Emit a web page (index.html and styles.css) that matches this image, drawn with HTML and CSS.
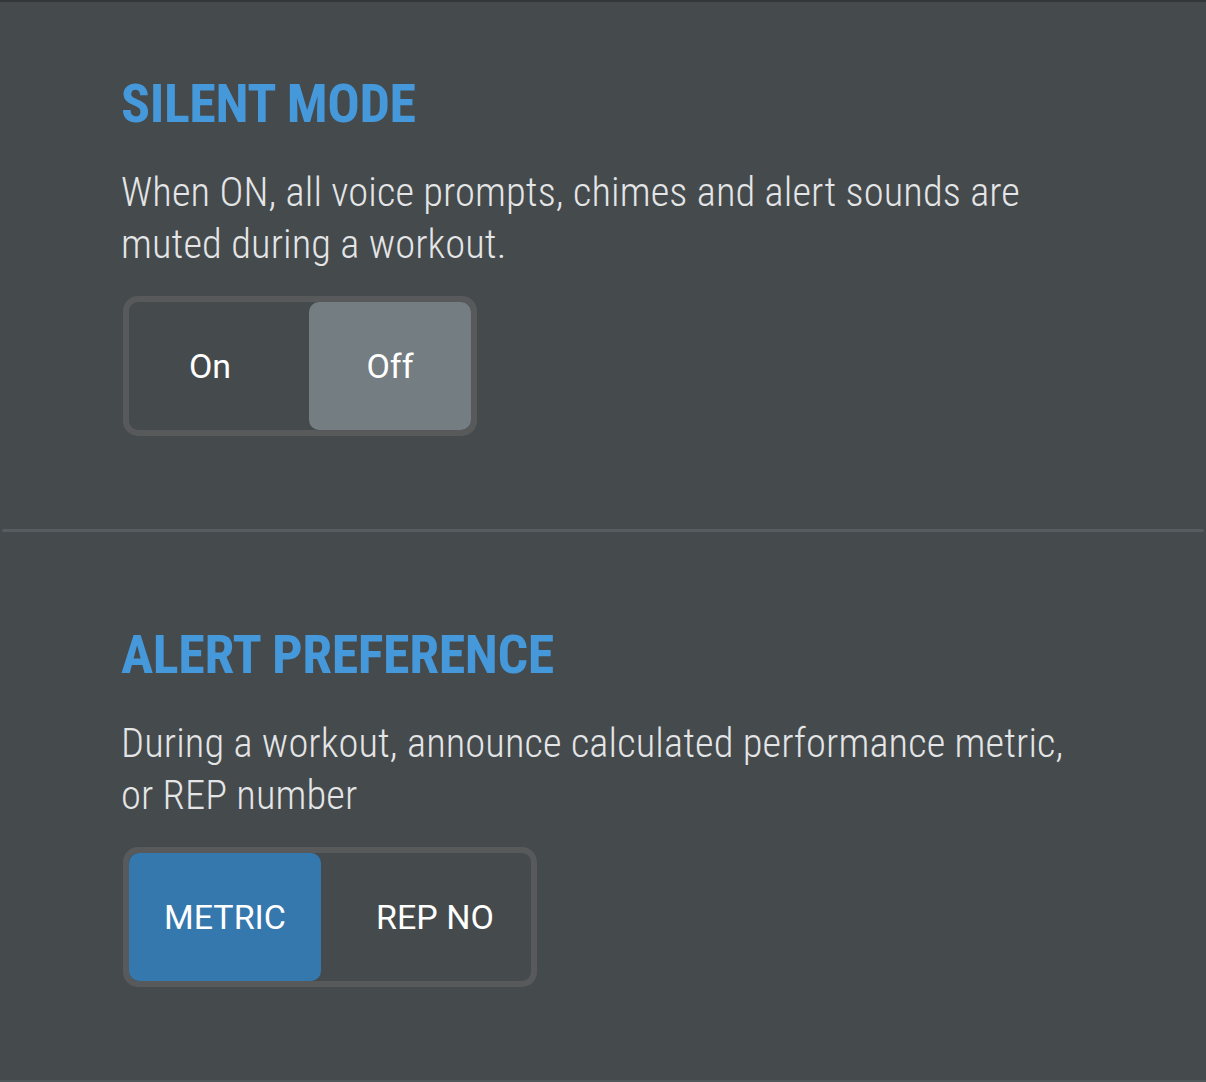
FILE: index.html
```html
<!DOCTYPE html>
<html lang="en">
<head>
    <meta charset="UTF-8">
    <meta name="viewport" content="width=device-width, initial-scale=1.0">
    <title>Workout Settings</title>
    <link rel="stylesheet" href="styles.css">
</head>
<body>
    <div class="settings">

        <!-- Silent mode -->
        <div class="setting">
            <h2>SILENT MODE</h2>
            <p>When ON, all voice prompts, chimes and alert sounds are muted during a workout.</p>
            <div class="toggle">
                <button class="segment small">On</button>
                <button class="segment small selected">Off</button>
            </div>
        </div>

        <hr class="divider">

        <!-- Alert preference -->
        <div class="setting">
            <h2>ALERT PREFERENCE</h2>
            <p>During a workout, announce calculated performance metric, or REP number</p>
            <div class="toggle">
                <button class="segment wide selected primary">METRIC</button>
                <button class="segment wide">REP NO</button>
            </div>
        </div>

    </div>
</body>
</html>
```

FILE: styles.css
```css
body {
    margin: 0;
    padding: 0;
    background-color: #454a4d;
    font-family: "Roboto Condensed", "Liberation Sans Narrow", sans-serif;
}
.settings {
    box-sizing: border-box;
    height: 1082px;
    border-top: 2px solid #33373a;
    border-bottom: 2px solid #4f575a;
    overflow: hidden;
}
.setting {
    padding: 75px 0 0 121px;
}
.setting h2 {
    margin: 0;
    font-size: 54px;
    line-height: 54px;
    font-weight: 700;
    letter-spacing: -0.4px;
    color: #4598da;
}
.setting p {
    margin: 35px 0 0 0;
    max-width: 980px;
    font-size: 40.5px;
    line-height: 52px;
    font-weight: 300;
    letter-spacing: 0.1px;
    color: #e4e5e6;
}
.toggle {
    display: inline-flex;
    gap: 18px;
    margin: 26px 0 0 2px;
    border: 6px solid #58595b;
    border-radius: 15px;
}
.segment {
    height: 128px;
    padding: 0;
    border: none;
    border-radius: 10px;
    background: transparent;
    color: #fff;
    font-family: Roboto, "Liberation Sans", sans-serif;
    font-size: 34px;
    font-weight: 400;
    cursor: pointer;
}
.segment.small {
    width: 162px;
}
.segment.wide {
    width: 192px;
}
.segment.selected {
    background-color: #737d82;
}
.segment.selected.primary {
    background-color: #3478ae;
}
.divider {
    margin: 93px 2px 21px 2px;
    height: 3px;
    border: none;
    border-radius: 2px;
    background-color: #565c5f;
}
```
